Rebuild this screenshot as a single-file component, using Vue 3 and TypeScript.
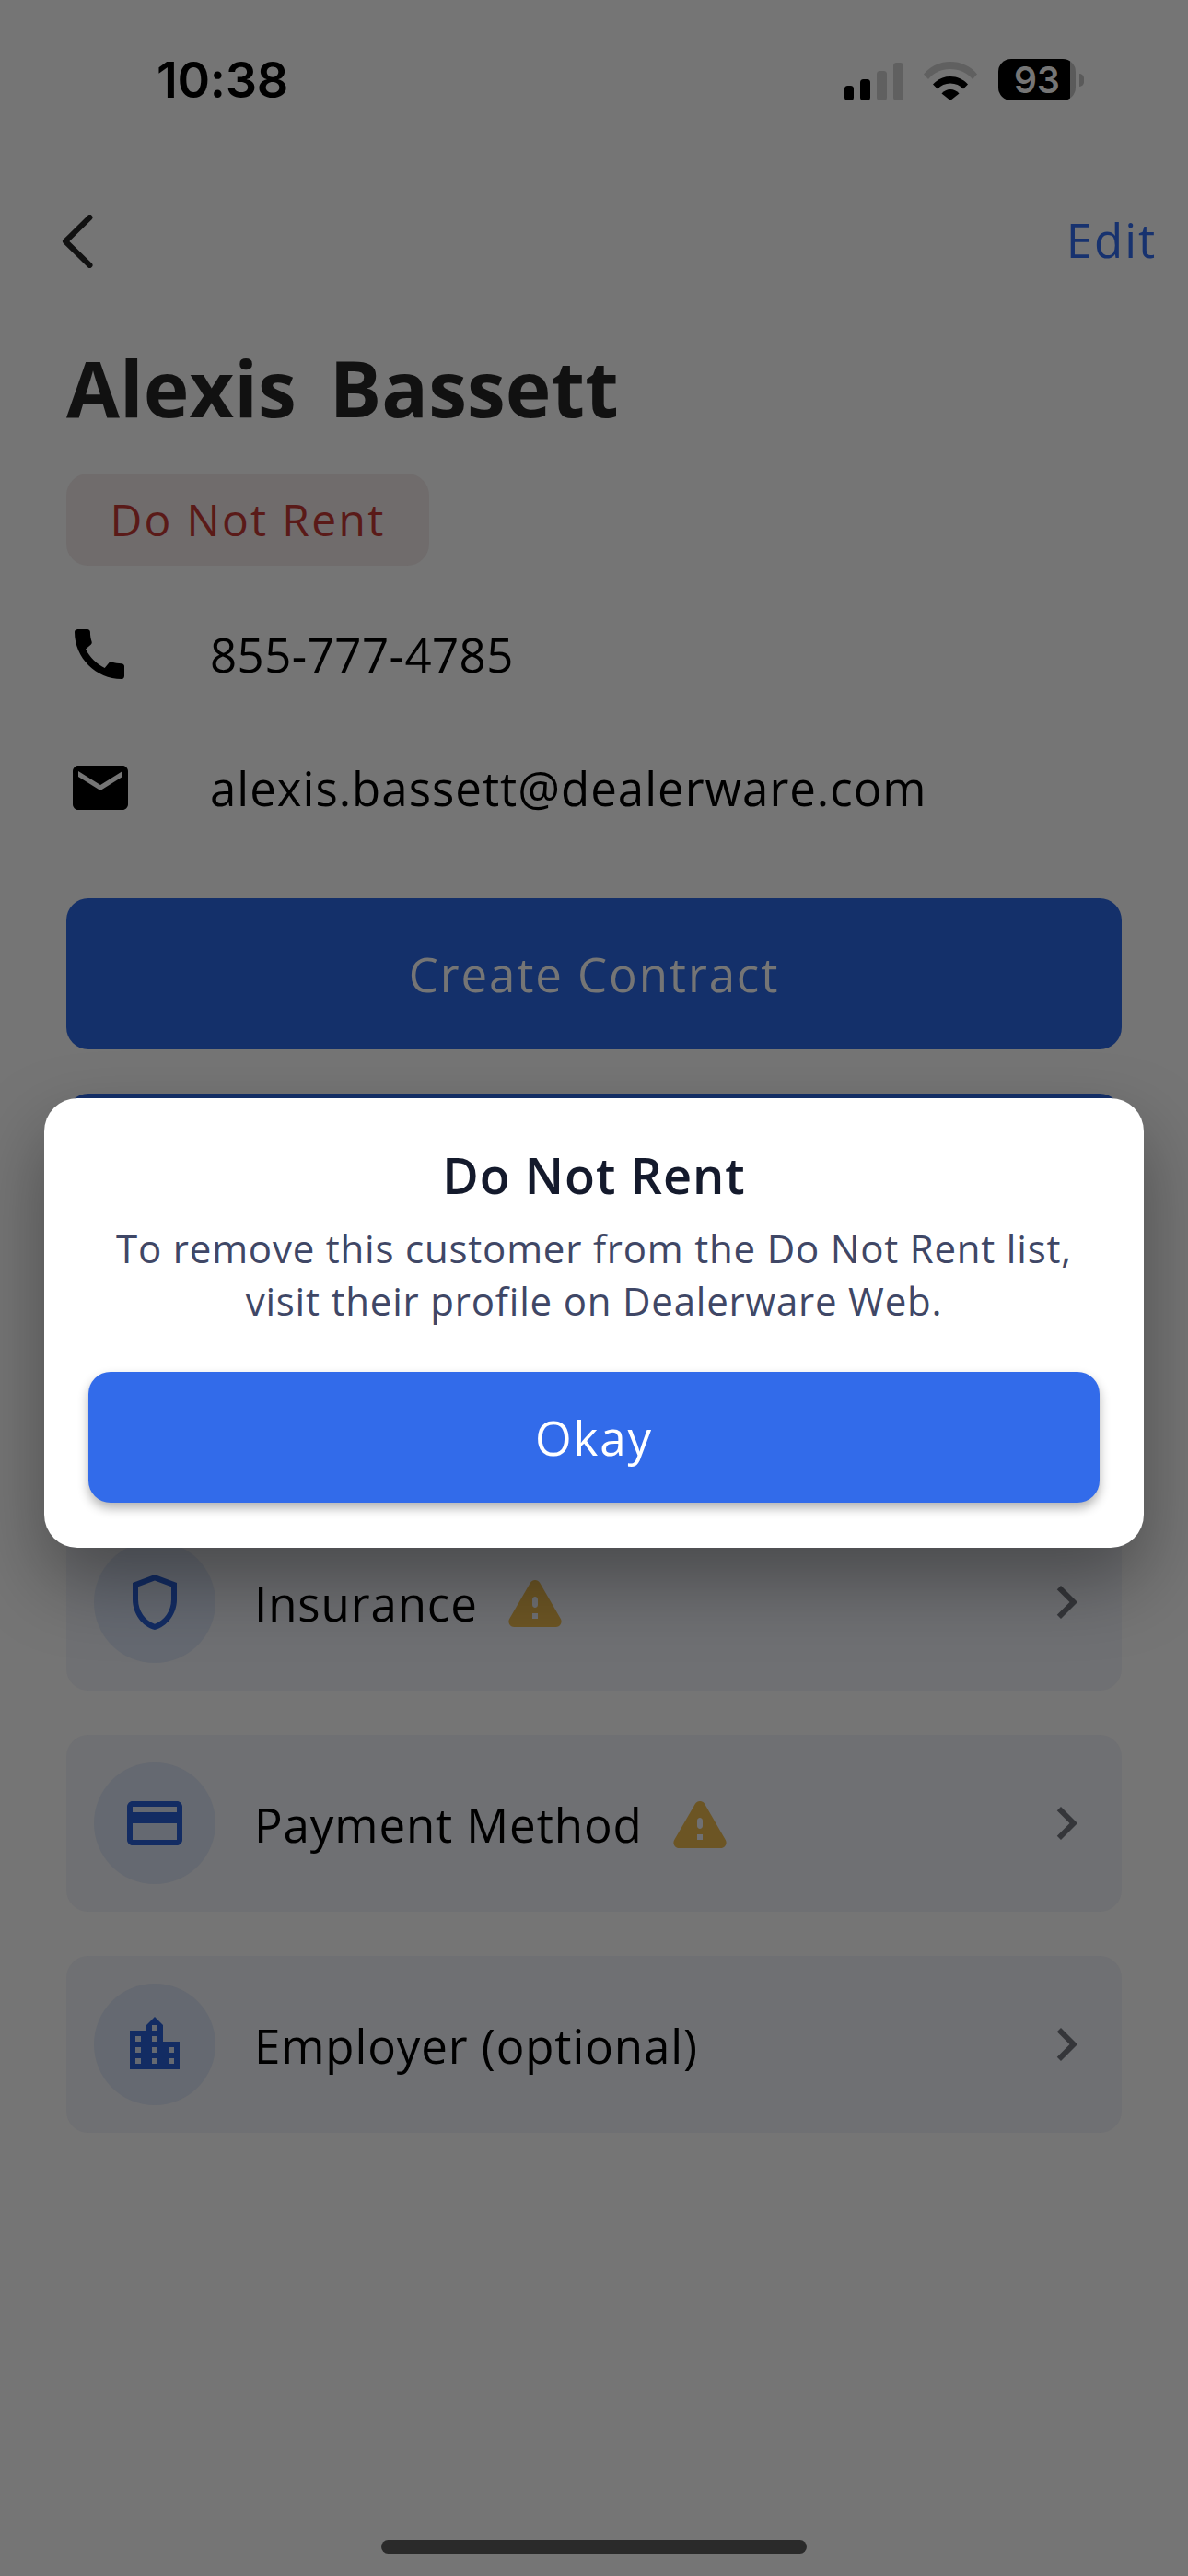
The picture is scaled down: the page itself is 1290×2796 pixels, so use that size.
<script setup lang="ts">
interface Row { label: string; icon: string; warn: boolean }
const call = 'M20.01 15.38c-1.23 0-2.42-.2-3.53-.56-.35-.12-.74-.03-1.01.24l-1.57 1.97c-2.83-1.35-5.48-3.9-6.89-6.83l1.95-1.66c.27-.28.35-.67.24-1.02-.37-1.11-.56-2.3-.56-3.53 0-.54-.45-.99-.99-.99H4.19C3.65 3 3 3.24 3 3.99 3 13.28 10.73 21 20.01 21c.71 0 .99-.63.99-1.18v-3.45c0-.54-.45-.99-.99-.99z'
const email = 'M20 4H4c-1.1 0-1.99.9-1.99 2L2 18c0 1.1.9 2 2 2h16c1.1 0 2-.9 2-2V6c0-1.1-.9-2-2-2zm0 4l-8 5-8-5V6l8 5 8-5v2z'
const warning = 'M4.47 21h15.06c1.54 0 2.5-1.67 1.73-3L13.73 4.99c-.77-1.33-2.69-1.33-3.46 0L2.74 18c-.77 1.33.19 3 1.73 3zM12 14c-.55 0-1-.45-1-1v-2c0-.55.45-1 1-1s1 .45 1 1v2c0 .55-.45 1-1 1zm1 4h-2v-2h2v2z'
const rows: Row[] = [
  { label: 'Insurance', warn: true, icon: 'M12 2L4 5v6.09c0 5.05 3.41 9.76 8 10.91 4.59-1.15 8-5.86 8-10.91V5l-8-3zm6 9.09c0 4-2.55 7.7-6 8.83-3.45-1.13-6-4.82-6-8.83v-4.7l6-2.25 6 2.25v4.71z' },
  { label: 'Payment Method', warn: true, icon: 'M20 4H4c-1.11 0-1.99.89-1.99 2L2 18c0 1.11.89 2 2 2h16c1.11 0 2-.89 2-2V6c0-1.11-.89-2-2-2zm0 14H4v-6h16v6zm0-10H4V6h16v2z' },
  { label: 'Employer (optional)', warn: false, icon: 'M15 11V5l-3-3-3 3v2H3v14h18V11h-6zm-8 8H5v-2h2v2zm0-4H5v-2h2v2zm0-4H5V9h2v2zm6 8h-2v-2h2v2zm0-4h-2v-2h2v2zm0-4h-2V9h2v2zm0-4h-2V5h2v2zm6 12h-2v-2h2v2zm0-4h-2v-2h2v2z' },
]
</script>

<template>
  <div class="screen">
    <header class="status">
      <span class="time">10:38</span>
      <div class="status-icons">
        <svg class="signal" width="64" height="41" viewBox="0 0 64 41">
          <rect x="0" y="25" width="10" height="16" rx="3.5" fill="#000" />
          <rect x="17" y="18" width="11" height="23" rx="3.5" fill="#000" />
          <rect x="35" y="9" width="11" height="32" rx="3.5" fill="#606060" />
          <rect x="53" y="0" width="11" height="41" rx="3.5" fill="#606060" />
        </svg>
        <svg class="wifi" width="58" height="42" viewBox="0 0 58 42">
          <path d="M0 13.5C7.5 4.5 17.5 0 29 0s21.5 4.500 29 13.500l-5 5.500C46.500 11.500 38.500 8 29 8S11.500 11.500 5 19z" fill="#606060" />
          <path d="M10 24.500C15 19 21.500 16 29 16s14 3 19 8.500l-5 5C39.500 25.500 34.500 23.500 29 23.500s-10.500 2-14 6z" fill="#000" />
          <path d="M19.500 34.500C22 31.500 25.500 30 29 30s7 1.500 9.500 4.500L29 42z" fill="#000" />
        </svg>
        <div class="battery">
          <div class="battery-body"><span class="battery-text">93</span></div>
          <span class="battery-nub"></span>
        </div>
      </div>
    </header>

    <nav class="nav">
      <svg class="back" width="34" height="58" viewBox="0 0 34 58">
        <path d="M30.500 3L4 29l26.500 26" fill="none" stroke="#111" stroke-width="6" stroke-linecap="round" stroke-linejoin="round" />
      </svg>
      <span class="edit">Edit</span>
    </nav>

    <main class="content">
      <h1 class="name"><span>Alexis</span><span>Bassett</span></h1>
      <div class="badge">Do Not Rent</div>

      <div class="contact contact-phone">
        <svg class="icon72" viewBox="0 0 24 24"><path :d="call" fill="#000" /></svg>
        <span>855-777-4785</span>
      </div>
      <div class="contact contact-mail">
        <svg class="icon72" viewBox="0 0 24 24"><path :d="email" fill="#000" /></svg>
        <span>alexis.bassett@dealerware.com</span>
      </div>

      <button class="primary">Create Contract</button>
      <button class="primary second"></button>

      <div class="list">
        <div class="card card-hidden"></div>
        <div v-for="row in rows" :key="row.label" class="card">
          <div class="circle">
            <svg class="icon72" viewBox="0 0 24 24"><path :d="row.icon" fill="#132c63" /></svg>
          </div>
          <span class="label">{{ row.label }}</span>
          <svg v-if="row.warn" class="icon72 warn" viewBox="0 0 24 24"><path :d="warning" fill="#6c5524" /></svg>
          <svg class="icon72 chevron" viewBox="0 0 24 24"><path d="M10 6L8.590 7.410 13.170 12l-4.580 4.590L10 18l6-6z" fill="#35363a" /></svg>
        </div>
      </div>
    </main>

    <section class="dialog">
      <h2 class="dialog-title">Do Not Rent</h2>
      <p class="dialog-text">To remove this customer from the Do Not Rent list,<br />visit their profile on Dealerware Web.</p>
      <button class="okay">Okay</button>
    </section>

    <div class="home-indicator"></div>
  </div>
</template>

<style scoped>
.screen {
  position: relative;
  width: 1290px;
  height: 2796px;
  overflow: hidden;
  background: #757575;
  font-family: "Open Sans", "Noto Sans", sans-serif;
  color: #000;
}
.status {
  display: flex;
  justify-content: space-between;
  align-items: flex-start;
  height: 232px;
  padding: 59px 113px 0 170px;
  box-sizing: border-box;
}
.time {
  font-family: Inter, "Liberation Sans", sans-serif;
  font-size: 54px;
  font-weight: 600;
  line-height: 56px;
  letter-spacing: -0.3px;
  color: #000;
}
.status-icons {
  display: flex;
  align-items: flex-end;
  gap: 22px;
  padding-top: 5px;
  height: 45px;
}
.battery {
  display: flex;
  align-items: center;
  gap: 4px;
  margin-left: 1px;
}
.battery-body {
  width: 84px;
  height: 45px;
  border-radius: 14px;
  background: linear-gradient(90deg, #000 0 93%, #5a5a5a 93% 100%);
  display: flex;
  align-items: center;
  justify-content: center;
}
.battery-text {
  font-family: Inter, "Liberation Sans", sans-serif;
  font-size: 39px;
  font-weight: 600;
  line-height: 45px;
  color: #757575;
}
.battery-nub {
  width: 5px;
  height: 14px;
  border-radius: 0 7px 7px 0;
  background: #5a5a5a;
}
.nav {
  display: flex;
  justify-content: space-between;
  align-items: center;
  height: 60px;
  padding: 0 34px 0 67px;
}
.back { display: block; }
.edit {
  padding-bottom: 3px;
  font-size: 51px;
  line-height: 57px;
  letter-spacing: 1.9px;
  color: #17326f;
}
.content {
  padding: 0 72px;
}
.name {
  display: flex;
  gap: 36px;
  margin: 79px 0 0;
  font-size: 84px;
  font-weight: 700;
  line-height: 100px;
  letter-spacing: 0.1px;
  color: #111;
}
.badge {
  width: 394px;
  height: 100px;
  box-sizing: border-box;
  margin-top: 43px;
  border-radius: 24px;
  background: #706c6c;
  color: #5a1a18;
  font-size: 48px;
  font-weight: 500;
  line-height: 100px;
  letter-spacing: 2.3px;
  text-align: center;
}
.contact {
  display: flex;
  align-items: center;
  gap: 84px;
  height: 72px;
  font-size: 51px;
}
.contact-phone {
  margin-top: 60px;
  letter-spacing: 0.45px;
}
.contact-mail {
  margin-top: 73px;
  padding-left: 1px;
  gap: 83px;
  letter-spacing: 1px;
}
.icon72 {
  display: block;
  width: 72px;
  height: 72px;
  flex: none;
}
.primary {
  display: block;
  width: 100%;
  height: 164px;
  margin-top: 48px;
  border: 0;
  border-radius: 24px;
  background: #14306a;
  color: #757575;
  font-family: inherit;
  font-size: 51px;
  letter-spacing: 1.9px;
}
.contact-mail + .primary { margin-top: 84px; }
.list {
  display: flex;
  flex-direction: column;
  gap: 48px;
  margin-top: 52px;
}
.card {
  display: flex;
  align-items: center;
  height: 192px;
  padding: 0 24px 0 30px;
  box-sizing: border-box;
  border-radius: 24px;
  background: #6f7073;
}
.circle {
  display: flex;
  align-items: center;
  justify-content: center;
  width: 132px;
  height: 132px;
  flex: none;
  border-radius: 50%;
  background: #656971;
}
.label {
  margin-left: 42px;
  padding-top: 2px;
  font-size: 51px;
  letter-spacing: 0.9px;
  white-space: nowrap;
}
.warn { margin-left: 26px; }
.chevron { margin-left: auto; }
.dialog {
  position: absolute;
  left: 48px;
  top: 1192px;
  width: 1194px;
  height: 488px;
  box-sizing: border-box;
  padding: 47px 48px 0;
  border-radius: 36px;
  background: #fff;
  box-shadow: 0 36px 80px rgba(0, 0, 0, 0.34);
  text-align: center;
}
.dialog-title {
  margin: 0;
  font-size: 54px;
  font-weight: 600;
  line-height: 72px;
  letter-spacing: 1px;
  color: #141a2c;
}
.dialog-text {
  margin: 15px -20px 0;
  font-size: 42px;
  line-height: 57px;
  letter-spacing: 0.8px;
  white-space: nowrap;
  color: #3f4766;
}
.okay {
  display: block;
  width: 100%;
  height: 142px;
  margin-top: 49px;
  border: 0;
  border-radius: 24px;
  background: #326bea;
  box-shadow: 0 6px 12px rgba(0, 0, 0, 0.3);
  color: #fff;
  font-family: inherit;
  font-size: 51px;
  letter-spacing: 1.9px;
}
.home-indicator {
  position: absolute;
  left: 414px;
  bottom: 24px;
  width: 462px;
  height: 15px;
  border-radius: 8px;
  background: #2a2a2a;
}
</style>

<style>
html, body { margin: 0; background: #757575; }
</style>
